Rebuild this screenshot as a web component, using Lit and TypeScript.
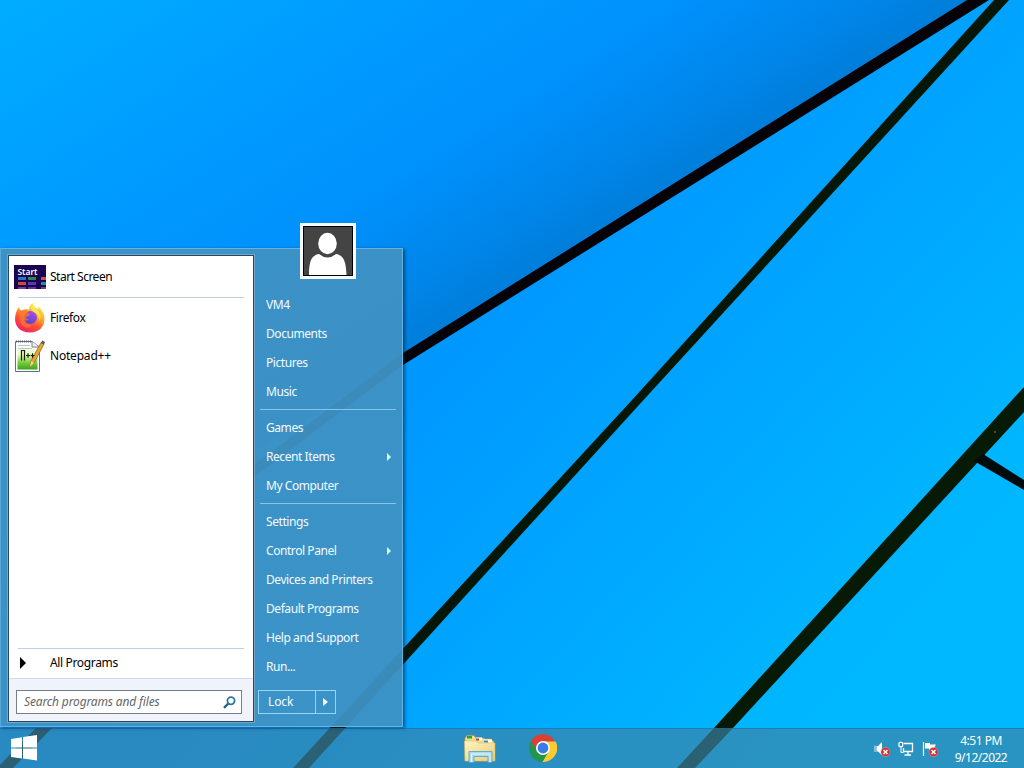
import { LitElement, html, css, svg } from "lit";
import { customElement, property } from "lit/decorators.js";

interface Entry {
  label: string;
  submenu?: boolean;
}

const GROUPS: Entry[][] = [
  [{ label: "VM4" }, { label: "Documents" }, { label: "Pictures" }, { label: "Music" }],
  [{ label: "Games" }, { label: "Recent Items", submenu: true }, { label: "My Computer" }],
  [
    { label: "Settings" },
    { label: "Control Panel", submenu: true },
    { label: "Devices and Printers" },
    { label: "Default Programs" },
    { label: "Help and Support" },
    { label: "Run..." },
  ],
];

const startScreenIcon = html`<svg width="32" height="24" viewBox="0 0 32 24" overflow="visible">
  <rect width="32" height="24" fill="#1a0450" />
  <text x="3.500" y="9.500" font-family="Noto Sans, sans-serif" font-size="9.500" font-weight="600" letter-spacing="0" fill="#fff" textLength="20" lengthAdjust="spacingAndGlyphs">Start</text>
  <rect x="4" y="12" width="8" height="3" fill="#2378c0" /><rect x="14" y="12" width="8" height="3" fill="#238d45" /><rect x="27" y="12" width="5" height="3" fill="#d94b45" />
  <rect x="4" y="17" width="8" height="3" fill="#cf463b" /><rect x="14" y="17" width="8" height="3" fill="#5d35b2" /><rect x="27" y="17" width="5" height="3" fill="#208aa8" />
  <rect x="4" y="22" width="8" height="2" fill="#69409a" /><rect x="14" y="22" width="8" height="2" fill="#573697" /><rect x="27" y="22" width="5" height="2" fill="#74416c" />
</svg>`;

const firefoxIcon = html`<svg width="32" height="32" viewBox="0 0 32 32">
  <defs>
    <linearGradient id="ff" x1=".8" y1="0" x2=".25" y2="1"><stop offset="0" stop-color="#fff04a" /><stop offset=".35" stop-color="#ffb02c" /><stop offset=".65" stop-color="#ff5134" /><stop offset="1" stop-color="#ed1d69" /></linearGradient>
    <linearGradient id="fp" x1=".8" y1="0" x2=".3" y2="1"><stop offset="0" stop-color="#b14cf0" /><stop offset="1" stop-color="#5046c4" /></linearGradient>
  </defs>
  <path d="M5 5 Q5 8 7 8.500 L10 8 Q13 7 15 7.500 Q15 4 18.500 1 Q20 5.500 24.500 7.500 Q24.500 5.500 24 4.500 Q31 10 30.500 18 Q29 30 16 30.500 Q2.500 30 1 18 Q1 10 5 5Z" fill="url(#ff)" />
  <circle cx="16.500" cy="15.500" r="6.500" fill="url(#fp)" />
  <path d="M7 9 Q11 6.500 14 8.500 Q12.500 11 16 12 Q16 13.500 13 14.500 L11.500 16 Q13 17.500 15 17 Q13.500 19.500 10 18 Q12 23.500 18 22.500 Q15 28 9 24 Q3 18 7 9Z" fill="#ff7a2c" opacity=".75" />
  <path d="M18.500 1 Q20 6 24 9 Q28 13 25.500 19 Q25 12 20 10 Q14 7 18.500 1Z" fill="#ffe84a" />
</svg>`;

const notepadIcon = html`<svg width="32" height="34" viewBox="0 0 32 34">
  <defs><linearGradient id="np" x1="0" y1="0" x2="0" y2="1"><stop offset="0" stop-color="#fff" /><stop offset=".4" stop-color="#e4f8b8" /><stop offset=".75" stop-color="#70cb32" /><stop offset="1" stop-color="#38a327" /></linearGradient></defs>
  <path d="M1.500 2.500H18L25.500 8V32.500H1.500Z" fill="#fff" stroke="#667078" />
  <path d="M3.500 6H17V10H23.500V30.500H3.500Z" fill="url(#np)" />
  <path d="M4 6.500H16M4 9.500H18" stroke="#9aaec0" stroke-width=".7" />
  <path d="M2 2.500H18" stroke="#59616a" stroke-width="2" stroke-dasharray="1 1" />
  <path d="M18 2.500V8H25" fill="#f4f4f4" stroke="#77808a" />
  <path d="M27 3.500L30 5L20 24L16 28L17 22Z" fill="#e6a936" stroke="#98641d" stroke-width=".8" />
  <path d="M26.800 4L28.300 1.500L31 3L30 5.500Z" fill="#62555c" />
  <path d="M17 22L20 24L16 28Z" fill="#efd39a" />
  <path d="M7.500 21.500V11.500H10.500V21.500M12 16.500H16M14 14.300V18.700M16.500 16.500H20.500M18.500 14.300V18.700" fill="none" stroke="#152208" stroke-width="1.200" />
</svg>`;

const explorerIcon = html`<svg width="34" height="32" viewBox="0 0 34 32">
  <defs><linearGradient id="fo" x1="0" y1="0" x2="1" y2="1"><stop offset="0" stop-color="#fff6c5" /><stop offset="1" stop-color="#eacb72" /></linearGradient></defs>
  <path d="M1 27V4L3 1.500H10L12 4H19L21 5H27L30 8V27Z" fill="#f4dc8c" stroke="#c29b45" stroke-width=".7" />
  <rect x="3" y="2" width="5" height="2.500" fill="#20a44c" /><rect x="12" y="3.500" width="6" height="3" fill="#fff" /><rect x="12" y="4.500" width="3" height="2" fill="#b5442b" />
  <rect x="20" y="5.500" width="8" height="3" fill="#fff" /><rect x="20" y="6.500" width="4" height="2" fill="#3386d4" />
  <path d="M.5 7H12L14 9H31V27H1Z" fill="url(#fo)" stroke="#d9b960" stroke-width=".5" />
  <path d="M5 28.500V17.500H28V28.500H24V22.500H10V28.500Z" fill="#a8dcf2" stroke="#4fa0cb" stroke-width=".8" />
  <path d="M7.500 28V20H26V28" fill="none" stroke="#e3f7ff" />
</svg>`;

const chromeIcon = html`<svg width="28" height="30" viewBox="-14 -14 28 30">
  <path d="M0-6.500H12.200A14 14 0 0 0-12.100-7L-5.600 3.250A6.500 6.500 0 0 1 0-6.500Z" fill="#df3f31" />
  <path d="M12.600-6.500H0A6.500 6.500 0 0 1 5.600 3.250L-.6 14A14 14 0 0 0 12.600-6.500Z" fill="#fccb32" />
  <path d="M-12.100-7A14 14 0 0 0-.6 14L5.600 3.250A6.500 6.500 0 0 1-5.600 3.250Z" fill="#23954a" />
  <circle r="7" fill="#fff" /><circle r="5.400" fill="#377de5" />
</svg>`;

const badge = svg`<g><circle cx="11.500" cy="11" r="4.600" fill="#d52f35" stroke="#f3a0a0" stroke-width=".5"/><path d="M9.500 9L13.500 13M13.500 9L9.500 13" stroke="#fff" stroke-width="1.500"/></g>`;

@customElement("desk-wallpaper")
class DeskWallpaper extends LitElement {
  static styles = css`
    :host, svg { display: block; }
  `;
  render() {
    return html`<svg width="1024" height="768" viewBox="0 0 1024 768">
      <defs>
        <linearGradient id="up" gradientUnits="userSpaceOnUse" x1="690" y1="180" x2="415" y2="-260">
          <stop offset="0" stop-color="#007dd8" /><stop offset=".12" stop-color="#0086ea" /><stop offset=".3" stop-color="#0091fd" />
          <stop offset=".6" stop-color="#009cff" /><stop offset="1" stop-color="#00adff" />
        </linearGradient>
        <linearGradient id="lo" gradientUnits="userSpaceOnUse" x1="500" y1="300" x2="880" y2="650">
          <stop offset="0" stop-color="#0098ff" /><stop offset=".35" stop-color="#00a3ff" /><stop offset=".75" stop-color="#00b0ff" /><stop offset="1" stop-color="#00b8ff" />
        </linearGradient>
      </defs>
      <rect width="1024" height="768" fill="url(#lo)" />
      <path d="M0 0H978L403 359L0 611Z" fill="url(#up)" />
      <path d="M967 0H989L403 365L250 480V468L403 353Z" fill="#050308" />
      <path d="M994 0H1009L643.500 400L309 768H293L632 400Z" fill="#061708" />
      <path d="M1024 387L714 728L677 768H695L733 728L1024 412Z" fill="#061a06" />
      <path d="M983 454L1024 480V490L974 461Z" fill="#020b0c" />
      <path d="M36 728H52L13 768H-3Z" fill="#061008" />
      <circle cx="995" cy="432" r="1" fill="#80502c" />
    </svg>`;
  }
}

@customElement("start-menu")
class StartMenu extends LitElement {
  static styles = css`
    :host {
      display: block; box-sizing: border-box; width: 403px; height: 479px;
      border: 1px solid #68b2de; border-left-color: #5ba7d5;
      background: linear-gradient(140deg, rgba(62, 146, 197, .96), rgba(62, 146, 196, .94));
      box-shadow: 2px 1px 3px rgba(0, 30, 70, .55);
    }
    .columns { display: flex; height: 100%; padding: 6px 5px 5px 7px; box-sizing: border-box; }
    .left {
      box-sizing: border-box; width: 246px; height: 467px; display: flex; flex-direction: column;
      background: #fff; border: 1px solid #28475e; outline: 1px solid #73a5c4; color: #000;
    }
    .item { display: flex; align-items: center; height: 38px; padding-left: 5px; }
    .item span { padding-left: 4px; }
    .item.first { height: 41px; }
    .item.first span { letter-spacing: -0.5px; }
    .item.gap { margin-top: 1px; }
    .item.wide { letter-spacing: -0.2px; }
    .item svg { display: block; flex: none; }
    .rule { height: 1px; margin: 0 9px; background: #bdd2e0; }
    .grow { flex: 1; }
    .all { display: flex; align-items: center; height: 29px; padding: 0 0 1px 11px; box-sizing: border-box; letter-spacing: -0.35px; }
    .all svg { margin-right: 24px; }
    .searchbar { box-sizing: border-box; height: 43px; padding: 11px 11px 0 7px; background: #f1f3fa; border-top: 1px solid #cdd9e4; }
    .field {
      box-sizing: border-box; height: 24px; display: flex; align-items: center; justify-content: space-between;
      border: 1px solid #747f8c; background: #fff; padding: 0 5px 0 7px; color: #666; font-style: italic; letter-spacing: -0.15px;
    }
    .right { flex: 1; color: #f4fbff; padding: 35px 0 0 5px; }
    .row { display: flex; align-items: center; justify-content: space-between; height: 29px; padding: 0 6px 0 7px; }
    .sep { height: 1px; margin: 3px 1px; background: #83c6e9; }
    .lock { display: flex; box-sizing: border-box; width: 78px; height: 24px; margin: 9px 0 0 -1px; border: 1px solid #94d5f5; }
    .lock span { width: 56px; padding-left: 9px; box-sizing: border-box; line-height: 22px; letter-spacing: -0.1px; }
    .lock i { flex: 1; display: flex; align-items: center; justify-content: center; border-left: 1px solid #94d5f5; }
    .avatar { position: absolute; left: 299px; top: -26px; width: 56px; height: 56px; display: block; }
  `;
  render() {
    return html`
      <div class="columns">
        <div class="left">
          <div class="item first">${startScreenIcon}<span>Start Screen</span></div>
          <div class="rule"></div>
          <div class="item gap">${firefoxIcon}<span>Firefox</span></div>
          <div class="item wide">${notepadIcon}<span>Notepad++</span></div>
          <div class="grow"></div>
          <div class="rule"></div>
          <div class="all"><svg width="6" height="12" viewBox="0 0 6 12"><path d="M0 0L6 6L0 12Z" fill="#000" /></svg>All Programs</div>
          <div class="searchbar">
            <div class="field">Search programs and files
              <svg width="13" height="13" viewBox="0 0 13 13"><circle cx="8" cy="4.800" r="3.600" fill="#fff" stroke="#2976a8" stroke-width="1.800" /><path d="M5.300 7.500L1 11.800" stroke="#285f89" stroke-width="2.400" /></svg>
            </div>
          </div>
        </div>
        <div class="right">
          ${GROUPS.map(
            (g, i) => html`${i ? html`<div class="sep"></div>` : null}
              ${g.map(
                (e) => html`<div class="row"><span>${e.label}</span>${e.submenu
                  ? html`<svg width="4" height="8" viewBox="0 0 4 8"><path d="M0 0L4 4L0 8Z" fill="#d8ffff" /></svg>`
                  : null}</div>`
              )}`
          )}
          <div class="lock"><span>Lock</span><i><svg width="5" height="8" viewBox="0 0 5 8"><path d="M0 0L5 4L0 8Z" fill="#fff" /></svg></i></div>
        </div>
      </div>
      <svg class="avatar" viewBox="0 0 56 56">
        <rect width="56" height="56" fill="#f7fbfd" /><rect x="3.500" y="3.500" width="49" height="49" fill="#444" stroke="#000" />
        <ellipse cx="27.500" cy="20.500" rx="9.300" ry="10.700" fill="#fff" />
        <path d="M9 52C9 39 11 32 19 31Q27.500 38 36 31C44 32 46 39 46.500 52Z" fill="#fff" />
      </svg>`;
  }
}

@customElement("task-bar")
class TaskBar extends LitElement {
  @property() time = "4:51 PM";
  @property() date = "9/12/2022";
  static styles = css`
    :host {
      display: grid; grid-template-columns: 464px 1fr auto; box-sizing: border-box; width: 1024px; height: 40px;
      background: rgba(60, 131, 165, .69); border-top: 1px solid rgba(15, 105, 165, .5); color: #fff;
    }
    svg { display: block; }
    .start { padding: 6px 0 0 10px; }
    .apps { display: flex; gap: 31px; padding-top: 5px; }
    .tray { display: flex; align-items: center; gap: 8px; }
    .clock { width: 70px; text-align: center; line-height: 17px; padding-right: 8px; letter-spacing: -0.5px; }
  `;
  render() {
    return html`
      <div class="start"><svg width="28" height="26" viewBox="0 0 28 26"><path d="M1 4L12 2.300V12.400H1ZM13 2.100L27 0V12.400H13ZM1 13.400H12V23.500L1 21.900ZM13 13.400H27V25.500L13 23.600Z" fill="#fff" /></svg></div>
      <div class="apps">${explorerIcon}${chromeIcon}</div>
      <div class="tray">
        <svg width="16" height="16" viewBox="0 0 16 16"><path d="M2.500 5H4L8 1V14L4 10.500H2.500Z" fill="#fff" /><path d="M1 4.500V11" stroke="#d8eef8" />${badge}</svg>
        <svg width="16" height="16" viewBox="0 0 16 16"><path d="M5.500 2.500H14.500V10.500H5.500V7M10 11V13.500M6.500 14H13" fill="none" stroke="#fff" stroke-width="1.300" /><rect x="1" y="1.300" width="3.600" height="4.400" rx="1" fill="#2b84b3" stroke="#fff" stroke-width="1.300" /><path d="M3 6V11.500H5.500" fill="none" stroke="#fff" /></svg>
        <svg width="16" height="16" viewBox="0 0 16 16"><path d="M1.500 1V15" stroke="#fff" stroke-width="1.200" /><path d="M3 2H8V3.500H14L12.500 6L14 9H7V7.500H3Z" fill="#fff" />${badge}</svg>
        <div class="clock">${this.time}<br />${this.date}</div>
      </div>`;
  }
}

@customElement("app-root")
class AppRoot extends LitElement {
  static styles = css`
    :host {
      display: block; position: relative; width: 1024px; height: 768px; overflow: hidden;
      font: 12px/16px "Noto Sans", "Open Sans", sans-serif; letter-spacing: -0.43px;
    }
    start-menu { position: absolute; left: 0; top: 248px; }
    task-bar { position: absolute; left: 0; top: 728px; }
  `;
  render() {
    return html`<desk-wallpaper></desk-wallpaper><task-bar></task-bar><start-menu></start-menu>`;
  }
}
